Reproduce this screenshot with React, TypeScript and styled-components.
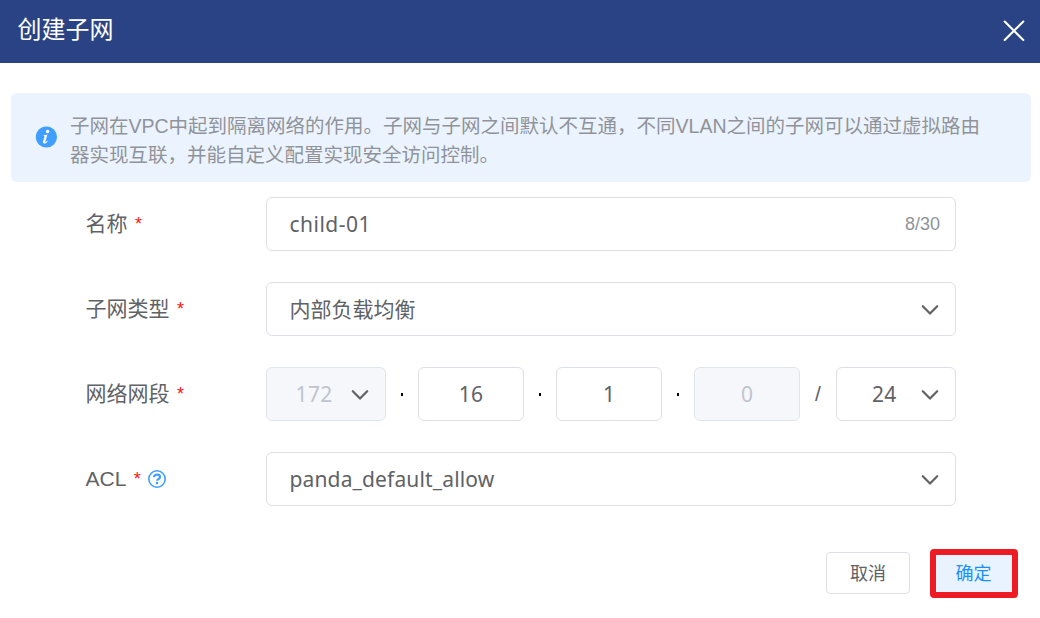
import React from "react";
import styled, { createGlobalStyle, css } from "styled-components";

const GlobalStyle = createGlobalStyle`
  *, *::before, *::after { box-sizing: border-box; }
  body {
    margin: 0;
    background: #fff;
    color: #606266;
    font-family: "Liberation Sans", "Noto Sans CJK SC", sans-serif;
    font-size: 21px;
  }
`;

const Dialog = styled.div`
  width: 1040px;
  height: 618px;
  overflow: hidden;
  background: #fff;
`;

const Header = styled.header`
  display: flex;
  align-items: center;
  justify-content: space-between;
  height: 63px;
  padding: 0 15px 2px 17.5px;
  background: #294384;
  color: #fff;
`;

const Title = styled.h1`
  margin: 0;
  padding-bottom: 2px;
  font-size: 24px;
  line-height: 36px;
  font-weight: 400;
`;

const CloseButton = styled.button`
  display: flex;
  padding: 0;
  border: 0;
  background: none;
  color: inherit;
`;

const Notice = styled.section`
  display: flex;
  align-items: center;
  height: 89px;
  margin: 30px 9px 15px 11px;
  padding: 0 24px 2px 24px;
  border-radius: 6px;
  background: #ebf3ff;
  color: #909399;
`;

const NoticeText = styled.p`
  margin: 9px 0 0 13px;
  font-size: 19.5px;
  line-height: 29px;
  white-space: nowrap;
`;

const Form = styled.form`
  display: flex;
  flex-direction: column;
  gap: 31px;
  padding: 0 84px 0 85.5px;
`;

const Row = styled.div`
  display: flex;
  align-items: center;
  height: 54px;
`;

const Label = styled.label`
  display: flex;
  align-items: center;
  width: 180.5px;
  line-height: 30px;
  padding-bottom: 1px;
`;

const Required = styled.span`
  margin: 0 0 0 7.5px;
  font-size: 18px;
  color: #ff1414;
`;

const HelpIcon = styled.svg`
  margin-left: 7px;
`;

const Field = styled.div<{ $width?: number; $disabled?: boolean; $center?: boolean; $arrow?: boolean }>`
  display: flex;
  align-items: center;
  justify-content: space-between;
  width: ${(p) => p.$width ?? 690}px;
  height: 54px;
  padding: 0 15px 0 22.5px;
  border: 1px solid #dcdfe6;
  border-radius: 6px;
  background: #fff;
  font-family: "Noto Sans", "Noto Sans CJK SC", sans-serif;
  line-height: 30px;
  ${(p) => p.$center && css`
    justify-content: center;
    padding: 0;
  `}
  ${(p) => p.$arrow && css`
    padding-right: 15px;
  `}
  ${(p) => p.$disabled && css`
    background: #f5f7fa;
    border-color: #e0e4ec;
    color: #c0c4cc;
  `}
`;

const Value = styled.span<{ $indent?: number; $spacing?: number }>`
  margin-left: ${(p) => p.$indent ?? 0}px;
  letter-spacing: ${(p) => p.$spacing ?? 0}px;
`;

const Counter = styled.span`
  font-family: "Liberation Sans", sans-serif;
  font-size: 18px;
  color: #909399;
`;

const Dot = styled.span`
  display: flex;
  justify-content: center;
  width: 32px;

  &::before {
    content: "";
    width: 2px;
    height: 3px;
    background: #000;
  }
`;

const Slash = styled.span`
  width: 36px;
  text-align: center;
`;

const Footer = styled.footer`
  display: flex;
  align-items: flex-start;
  justify-content: flex-end;
  gap: 20px;
  margin-top: 43px;
  padding-right: 22px;
`;

const Button = styled.button<{ $primary?: boolean }>`
  width: 84px;
  height: 42px;
  margin-top: 3px;
  padding: 0 0 1px;
  border: 1px solid #dcdfe6;
  border-radius: 4px;
  background: #fff;
  color: #606266;
  font: 18px/27px "Noto Sans CJK SC", sans-serif;
  ${(p) => p.$primary && css`
    width: 88px;
    height: 49px;
    margin-top: 0;
    padding: 0 1px 2px 0;
    border: 6px solid #ed1c24;
    background: #e8f3ff;
    color: #1890ff;
  `}
`;

const Chevron = () => (
  <svg width="20" height="20" viewBox="0 0 20 20" fill="none" stroke="#606266" strokeWidth="2.2" strokeLinecap="round" strokeLinejoin="round">
    <path d="M2.8 7.2 10 14.6l7.2-7.4" />
  </svg>
);

const Info = () => (
  <svg width="22" height="22" viewBox="0 0 22 22">
    <circle cx="11.4" cy="11" r="10.6" fill="#409eff" />
    <circle cx="12.6" cy="5.5" r="1.7" fill="#fff" />
    <path d="M8.6 9.2c1.3-.1 2.7-.5 3.8-.8l-2.1 7.3c-.1.5.2.6.6.3.5-.3.9-.8 1.3-1.4l.6.4c-.9 1.6-2.2 2.6-3.5 2.6-1.2 0-1.7-.8-1.3-2l1.5-4.8c.1-.6 0-.8-.9-.9z" fill="#fff" />
  </svg>
);

const Help = () => (
  <HelpIcon width="18" height="18" viewBox="0 0 18 18" fill="none" stroke="#409eff">
    <circle cx="9" cy="9" r="8.2" strokeWidth="1.6" />
    <path d="M6 7.2C6 5.5 7.2 4.7 9 4.7s3 .8 3 2.2c0 1.1-.7 1.6-1.5 2.1-.9.6-1.4.9-1.4 1.8" strokeWidth="2.2" />
    <circle cx="9" cy="13.1" r="1.3" fill="#409eff" stroke="none" />
  </HelpIcon>
);

export default function App() {
  return (
    <>
      <GlobalStyle />
      <Dialog>
        <Header>
          <Title>创建子网</Title>
          <CloseButton type="button" aria-label="关闭">
            <svg width="22" height="22" viewBox="0 0 22 22" fill="none" stroke="currentColor" strokeWidth="2.1" strokeLinecap="round">
              <path d="M1.7 1.5 20.3 20M20.3 1.5 1.7 20" />
            </svg>
          </CloseButton>
        </Header>
        <Notice>
          <Info />
          <NoticeText>
            子网在VPC中起到隔离网络的作用。子网与子网之间默认不互通，不同VLAN之间的子网可以通过虚拟路由
            <br />
            器实现互联，并能自定义配置实现安全访问控制。
          </NoticeText>
        </Notice>
        <Form>
          <Row>
            <Label>名称<Required>*</Required></Label>
            <Field>
              <Value $spacing={0.48}>child-01</Value>
              <Counter>8/30</Counter>
            </Field>
          </Row>
          <Row>
            <Label>子网类型<Required>*</Required></Label>
            <Field $arrow>
              <Value>内部负载均衡</Value>
              <Chevron />
            </Field>
          </Row>
          <Row>
            <Label>网络网段<Required>*</Required></Label>
            <Field $width={120} $disabled $arrow>
              <Value $indent={6} $spacing={0.4}>172</Value>
              <Chevron />
            </Field>
            <Dot />
            <Field $width={106} $center><Value $spacing={0.3}>16</Value></Field>
            <Dot />
            <Field $width={106} $center><Value>1</Value></Field>
            <Dot />
            <Field $width={106} $center $disabled><Value>0</Value></Field>
            <Slash>/</Slash>
            <Field $width={120} $arrow>
              <Value $indent={12.5} $spacing={0.3}>24</Value>
              <Chevron />
            </Field>
          </Row>
          <Row>
            <Label>ACL<Required>*</Required><Help /></Label>
            <Field $arrow>
              <Value $spacing={0.14}>panda_default_allow</Value>
              <Chevron />
            </Field>
          </Row>
        </Form>
        <Footer>
          <Button type="button">取消</Button>
          <Button type="button" $primary>确定</Button>
        </Footer>
      </Dialog>
    </>
  );
}
